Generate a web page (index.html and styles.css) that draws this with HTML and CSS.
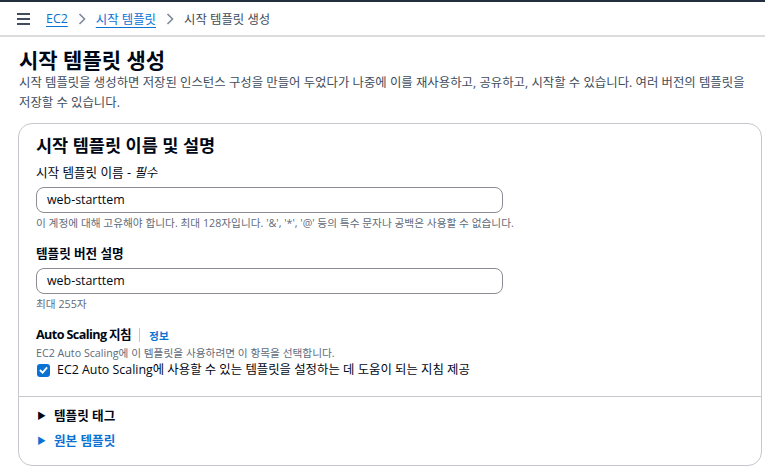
FILE: index.html
```html
<!DOCTYPE html>
<html lang="ko">
<head>
<meta charset="utf-8">
<link rel="stylesheet" href="styles.css">
</head>
<body>
<header class="topbar">
  <svg class="menu" width="13" height="12" viewBox="0 0 13 12"><path d="M0 1h13M0 6h13M0 11h13" stroke="#414d5c" stroke-width="2"/></svg>
  <nav class="crumbs">
    <a class="link">EC2</a>
    <svg class="chev" width="8" height="12" viewBox="0 0 8 12"><path d="M1.5 1l5 5-5 5" fill="none" stroke="#7d8998" stroke-width="1.6"/></svg>
    <a class="link">시작 템플릿</a>
    <svg class="chev" width="8" height="12" viewBox="0 0 8 12"><path d="M1.5 1l5 5-5 5" fill="none" stroke="#7d8998" stroke-width="1.6"/></svg>
    <span class="current">시작 템플릿 생성</span>
  </nav>
</header>
<main class="page">
  <h1 class="title">시작 템플릿 생성</h1>
  <p class="desc">시작 템플릿을 생성하면 저장된 인스턴스 구성을 만들어 두었다가 나중에 이를 재사용하고, 공유하고, 시작할 수 있습니다. 여러 버전의 템플릿을 저장할 수 있습니다.</p>
  <section class="card">
    <div class="card-body">
      <h2 class="card-title">시작 템플릿 이름 및 설명</h2>
      <div class="field">
        <label class="label-plain">시작 템플릿 이름 - <i>필수</i></label>
        <div class="input">web-starttem</div>
        <div class="hint">이 계정에 대해 고유해야 합니다. 최대 128자입니다. '&amp;', '*', '@' 등의 특수 문자나 공백은 사용할 수 없습니다.</div>
      </div>
      <div class="field">
        <label class="label-bold">템플릿 버전 설명</label>
        <div class="input">web-starttem</div>
        <div class="hint">최대 255자</div>
      </div>
      <div class="field">
        <div class="label-row"><span class="label-bold tight">Auto Scaling 지침</span><span class="sep"></span><a class="info">정보</a></div>
        <div class="hint hint-top">EC2 Auto Scaling에 이 템플릿을 사용하려면 이 항목을 선택합니다.</div>
        <div class="check-row">
          <span class="checkbox"><svg width="9" height="8" viewBox="0 0 10 8"><path d="M1 4l3 3 5-6" fill="none" stroke="#fff" stroke-width="2"/></svg></span>
          <span>EC2 Auto Scaling에 사용할 수 있는 템플릿을 설정하는 데 도움이 되는 지침 제공</span>
        </div>
      </div>
    </div>
    <div class="card-foot">
      <div class="expander"><span class="caret">▶</span>템플릿 태그</div>
      <div class="expander blue"><span class="caret">▶</span>원본 템플릿</div>
    </div>
  </section>
</main>
</body>
</html>
```
FILE: styles.css
```css
* { box-sizing: border-box; }
html, body { margin: 0; padding: 0; background: #fff; }
body {
  font-family: "Open Sans", "Noto Sans CJK KR", sans-serif;
  color: #000716;
  width: 765px;
  height: 472px;
  overflow: hidden;
}
.topbar {
  height: 37px;
  border-top: 2px solid #232f3e;
  border-bottom: 2px solid #dcdcdc;
  display: flex;
  align-items: center;
  padding-left: 17px;
}
.menu { margin-right: 16px; }
.crumbs {
  display: flex;
  align-items: center;
  gap: 10px;
  font-size: 12.4px;
}
.link {
  color: #0972d3;
  text-decoration: underline;
  text-underline-offset: 3px;
}
.current { color: #414d5c; }
.page { padding: 9px 3px 0 18px; }
.title {
  font-size: 21px;
  font-weight: 700;
  margin: 0;
  line-height: 28px;
  padding-left: 1px;
}
.desc {
  margin: -1px 0 0 1px;
  font-size: 12.4px;
  line-height: 20px;
  color: #414d5c;
  word-break: keep-all;
}
.card {
  margin-top: 10px;
  border: 1px solid #c6c6cd;
  border-radius: 14px;
  height: 343px;
}
.card-body { padding: 9px 17px 17px; border-bottom: 1px solid #c6c6cd; }
.card-title {
  margin: 0;
  font-size: 17.5px;
  font-weight: 700;
  line-height: 24px;
}
.field { margin-top: 6px; display: flex; flex-direction: column; }
.field + .field { margin-top: 13px; }
.label-plain, .label-bold { font-size: 12.6px; line-height: 20px; }
.label-bold { font-weight: 700; }
.tight { letter-spacing: -0.6px; }
.input {
  margin-top: 4px;
  width: 467px;
  height: 26px;
  border: 1px solid #8c8c94;
  border-radius: 8px;
  font-size: 12.4px;
  line-height: 24px;
  padding-left: 10px;
  color: #000716;
}
.hint {
  font-size: 10.7px;
  line-height: 16px;
  color: #5f6b7a;
  margin-top: 2px;
}
.hint-top { margin-top: 0; }
.label-row { display: flex; align-items: center; }
.sep { width: 1px; height: 14px; background: #c6c6cd; margin: 0 9px 0 8px; }
.info { color: #0972d3; font-size: 10.7px; font-weight: 700; }
.check-row { display: flex; align-items: center; gap: 7px; font-size: 12.4px; line-height: 18px; margin-top: 0; }
.checkbox {
  width: 13px; height: 13px;
  margin-left: 1px;
  background: #0972d3;
  border-radius: 3px;
  display: flex; align-items: center; justify-content: center;
}
.card-foot { padding: 6px 17px; }
.expander {
  font-size: 12.6px;
  font-weight: 700;
  line-height: 25px;
  display: flex;
  align-items: center;
}
.expander.blue { color: #0972d3; }
.caret { font-size: 9px; margin-right: 8px; margin-left: 1px; }
```
